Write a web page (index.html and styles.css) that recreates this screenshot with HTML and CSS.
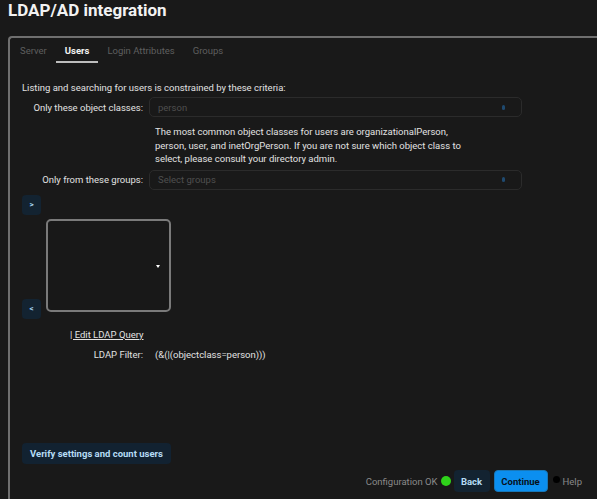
FILE: index.html
```html
<!DOCTYPE html>
<html>
<head>
<meta charset="utf-8">
<link rel="stylesheet" href="styles.css">
</head>
<body>
<div class="page">
  <h1 class="title">LDAP/AD integration</h1>
  <div class="panel">
    <div class="tabs">
      <span class="tab">Server</span>
      <span class="tab active">Users</span>
      <span class="tab">Login Attributes</span>
      <span class="tab">Groups</span>
    </div>
    <div class="content">
      <p class="intro">Listing and searching for users is constrained by these criteria:</p>
      <div class="row">
        <label class="lbl">Only these object classes:</label>
        <div class="select"><span class="ph">person</span><span class="arrow"></span></div>
      </div>
      <p class="help">The most common object classes for users are organizationalPerson, person, user, and inetOrgPerson. If you are not sure which object class to select, please consult your directory admin.</p>
      <div class="row">
        <label class="lbl">Only from these groups:</label>
        <div class="select"><span class="ph">Select groups</span><span class="arrow"></span></div>
      </div>
      <div class="picker">
        <button class="sq">&gt;</button>
        <div class="listbox"><span class="tri"></span></div>
        <button class="sq">&lt;</button>
      </div>
      <a class="edit">| Edit LDAP Query</a>
      <div class="row filter">
        <span class="lbl">LDAP Filter:</span>
        <span class="fval">(&amp;(|(objectclass=person)))</span>
      </div>
      <button class="verify">Verify settings and count users</button>
    </div>
    <div class="footer">
      <span class="status">Configuration OK</span>
      <span class="dot"></span>
      <button class="back">Back</button>
      <button class="cont">Continue</button>
      <span class="info"></span>
      <span class="helplink">Help</span>
    </div>
  </div>
</div>
</body>
</html>
```

FILE: styles.css
```css
html, body {
  margin: 0;
  padding: 0;
  background: #191919;
  overflow: hidden;
  height: 100%;
}
body {
  font-family: Roboto, "Liberation Sans", sans-serif;
  color: #e2e2e2;
}
.page {
  padding: 0 0 0 8px;
  height: 499px;
  display: flex;
  flex-direction: column;
}
.title {
  margin: 0;
  font-size: 17px;
  font-weight: 700;
  line-height: 21px;
  color: #f2f2f2;
  height: 36px;
}
.panel {
  flex: 1;
  border-top: 2px solid #6f6f6f;
  border-left: 2px solid #6f6f6f;
  border-top-left-radius: 4px;
  margin-right: -20px;
  display: flex;
  flex-direction: column;
}
.tabs {
  display: flex;
  padding-left: 10px;
  height: 25px;
  align-items: flex-end;
}
.tab {
  font-size: 9.5px;
  color: #5f5f5f;
  padding: 0 9px 4px;
  line-height: 12px;
  border-bottom: 2px solid transparent;
}
.tab:first-child { padding-left: 0; }
.tab.active {
  color: #f2f2f2;
  font-weight: 700;
  border-bottom-color: #bdbdbd;
}
.content {
  padding: 0 0 0 12px;
  flex: 1;
  display: flex;
  flex-direction: column;
  align-items: flex-start;
  font-size: 9.5px;
}
.intro {
  margin: 18px 0 3px;
  line-height: 13px;
}
.row {
  display: flex;
  align-items: center;
  gap: 6px;
}
.lbl {
  width: 121px;
  text-align: right;
  line-height: 13px;
}
.select {
  width: 373px;
  height: 20px;
  border: 1px solid #2b2b2b;
  border-radius: 5px;
  display: flex;
  align-items: center;
  justify-content: space-between;
  padding: 0 16px 0 8px;
  box-sizing: border-box;
}
.ph { color: #4f4f4f; }
.arrow {
  width: 3px;
  height: 5px;
  border-radius: 2px;
  background: #1f4a70;
}
.help {
  margin: 8px 0 4px 133px;
  width: 310px;
  line-height: 13.5px;
}
.picker {
  display: flex;
  flex-direction: column;
  margin-top: 5px;
}
.sq {
  width: 19px;
  height: 20px;
  border: 0;
  border-radius: 4px;
  background: #132331;
  color: #a8d4f2;
  font: 700 8px Roboto, sans-serif;
  padding: 0;
}
.listbox {
  margin: 4px 0 -13px 24px;
  width: 121px;
  height: 89px;
  border: 2px solid #7a7a7a;
  border-radius: 5px;
  position: relative;
  background: #181818;
}
.tri {
  position: absolute;
  right: 9px;
  top: 44px;
  width: 0;
  height: 0;
  border-left: 2.5px solid transparent;
  border-right: 2.5px solid transparent;
  border-top: 3px solid #fff;
}
.edit {
  margin: 9px 0 0 48px;
  text-decoration: underline;
  line-height: 13px;
  color: #e2e2e2;
}
.filter {
  margin-top: 7px;
  gap: 12px;
}
.verify {
  margin-top: auto;
  margin-bottom: 35px;
  height: 21px;
  padding: 0 8px;
  border: 0;
  border-radius: 4px;
  background: #122231;
  color: #b6dcf5;
  font: 700 9.5px Roboto, sans-serif;
}
.footer {
  position: absolute;
  right: 15px;
  bottom: 7px;
  display: flex;
  align-items: center;
  font-size: 9.5px;
}
.status { color: #8a8a8a; margin-right: 3px; }
.dot {
  width: 10px;
  height: 10px;
  border-radius: 50%;
  background: #2fd21a;
  margin-right: 3px;
}
.back, .cont {
  border: 0;
  border-radius: 4px;
  font: 700 9.5px Roboto, sans-serif;
  height: 22px;
}
.back {
  width: 36px;
  background: #132331;
  color: #b6dcf5;
  margin-right: 4px;
}
.cont {
  width: 54px;
  background: #0b8ff0;
  color: #07121c;
  border: 1px solid #1877b8;
}
.info {
  width: 7px;
  height: 7px;
  border-radius: 50%;
  background: #000;
  margin: 0 3px 4px 5px;
}
.helplink { color: #8a8a8a; }
```
